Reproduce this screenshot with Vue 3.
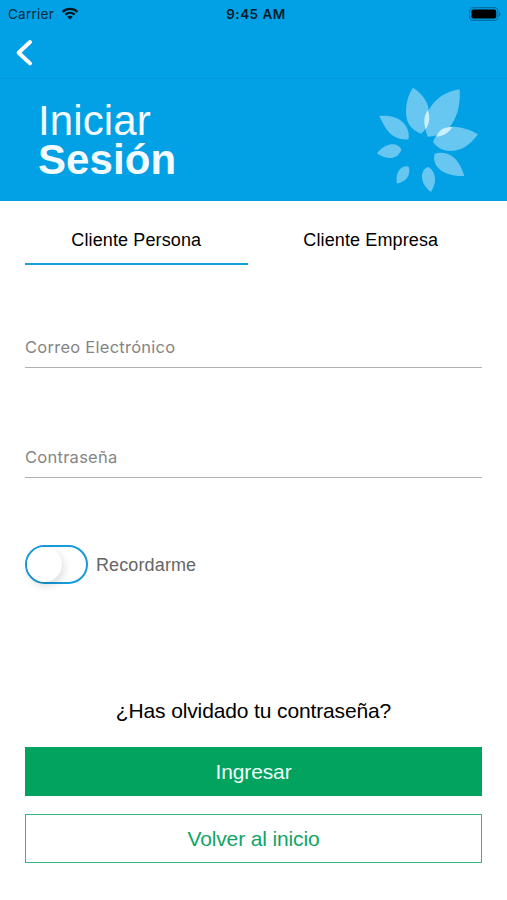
<template>
  <div class="login-screen">
    <header class="top">
      <div class="status-bar">
        <div class="carrier">
          <span class="carrier-name">Carrier</span>
          <svg class="wifi" viewBox="0 0 18 13" aria-hidden="true">
            <path d="M1.6 4.9C5.8.9 12.2.9 16.4 4.9" />
            <path d="M4.3 7.7c2.7-2.5 6.7-2.5 9.4 0" />
            <path class="dot" d="M6.3 9.8c1.5-1.3 3.9-1.3 5.4 0L9 12.5z" />
          </svg>
        </div>
        <span class="clock">9:45 AM</span>
        <svg class="battery" viewBox="0 0 32 14" aria-hidden="true">
          <rect class="shell" x=".6" y=".6" width="28.3" height="12.8" rx="3.6" />
          <rect x="2.4" y="2.5" width="24.8" height="9" rx="2" />
          <path class="tip" d="M30 4.7c2 .8 2 3.8 0 4.6z" />
        </svg>
      </div>
      <nav class="nav-bar">
        <button class="back" type="button" aria-label="Volver">
          <svg viewBox="0 0 18 28"><path d="M15 3 3.6 13.7 15 24.4" /></svg>
        </button>
      </nav>
    </header>

    <section class="hero">
      <h1>Iniciar<strong>Sesión</strong></h1>
      <svg class="flower" viewBox="30 15 315 330" aria-hidden="true">
        <path v-for="(d, i) in petals" :key="i" :d="d" />
        <path class="overlap" d="M188 90c8 21 6 41-6 58-7-22-5-40 6-58z" />
        <path class="overlap" d="M214 170c7-20 24-31 48-29-10 17-24 26-48 29z" />
      </svg>
    </section>

    <main class="content">
      <div class="tabs">
        <button
          v-for="tab in tabs"
          :key="tab"
          type="button"
          :class="['tab', { active: tab === activeTab }]"
          @click="activeTab = tab"
        >
          {{ tab }}
        </button>
      </div>

      <form @submit.prevent>
        <input v-model="email" class="field" type="email" placeholder="Correo Electrónico" />
        <input v-model="password" class="field" type="password" placeholder="Contraseña" />

        <label class="remember">
          <input v-model="remember" type="checkbox" />
          <span class="switch"><span class="knob"></span></span>
          <span class="remember-text">Recordarme</span>
        </label>

        <p class="forgot">¿Has olvidado tu contraseña?</p>
        <button class="btn primary" type="submit">Ingresar</button>
        <button class="btn outline" type="button">Volver al inicio</button>
      </form>
    </main>
  </div>
</template>

<script setup>
import { ref } from 'vue';

const tabs = ['Cliente Persona', 'Cliente Empresa'];
const activeTab = ref(tabs[0]);
const email = ref('');
const password = ref('');
const remember = ref(false);

// Pétalos del logo, en sentido horario desde arriba
const petals = [
  'M144 23C175 43 193 70 192 103C191 130 183 151 168 161C137 150 123 127 123 97C123 68 130 43 144 23Z',
  'M284 28C286 66 281 99 263 128C249 150 229 167 188 170C176 142 179 109 195 84C213 55 241 35 284 28Z',
  'M339 163C317 193 292 212 258 213C235 213 217 204 204 186C214 157 233 141 258 140C286 140 316 148 339 163Z',
  'M298 288C261 289 232 280 217 261C207 248 205 235 209 221C230 215 251 220 267 233C281 245 290 263 298 288Z',
  'M198 336C178 321 169 302 171 284C173 272 179 264 189 261C204 269 210 283 210 299C210 312 205 324 198 336Z',
  'M96 311C92 290 97 275 108 265C115 259 123 257 131 260C136 275 131 290 120 300C113 306 105 309 96 311Z',
  'M36 220C48 204 63 195 81 193C94 192 104 198 109 209C103 225 91 234 74 234C59 234 46 228 36 220Z',
  'M43 108C73 105 99 112 116 129C128 142 133 159 131 178C106 180 86 173 72 157C59 142 51 125 43 108Z',
];
</script>

<style>
body {
  margin: 0;
  background: #fff;
}
</style>

<style scoped>
.login-screen {
  width: 100%;
  min-height: 900px;
  font-family: "Liberation Sans", Arial, sans-serif;
  color: #000;
}

button,
input {
  font-family: inherit;
  box-sizing: border-box;
}

.top {
  height: 79px;
  box-sizing: border-box;
  background: #02a1e6;
  border-bottom: 1px solid #0298dc;
}

.status-bar {
  display: grid;
  grid-template-columns: 1fr auto 1fr;
  align-items: center;
  height: 27px;
  padding: 0 6px 0 8px;
  font: 13.5px Inter, sans-serif;
  color: #06293c;
}

.carrier {
  display: flex;
  align-items: center;
  gap: 7px;
}

.carrier-name {
  letter-spacing: 0.25px;
}

.wifi {
  width: 18px;
  height: 13px;
  fill: none;
  stroke: #001722;
  stroke-width: 2.3;
}
.wifi .dot {
  fill: #001722;
  stroke: none;
}

.clock {
  padding-left: 3px;
  font-weight: 600;
  letter-spacing: 0.5px;
  color: #001b29;
}

.battery {
  justify-self: end;
  width: 32px;
  height: 14px;
}
.battery .shell {
  fill: none;
  stroke: #0272a3;
  stroke-width: 1.1;
}
.battery .tip {
  fill: #0272a3;
}

.nav-bar {
  display: flex;
  align-items: center;
  height: 51px;
  padding-left: 15px;
}

.back {
  display: flex;
  padding: 0;
  border: none;
  background: none;
  cursor: pointer;
}
.back svg {
  width: 18px;
  height: 28px;
  fill: none;
  stroke: #fff;
  stroke-width: 4;
  stroke-linecap: round;
  stroke-linejoin: round;
}

.hero {
  display: flex;
  justify-content: space-between;
  align-items: flex-start;
  box-sizing: border-box;
  height: 122px;
  padding: 6px 27px 0 38px;
  background: #02a1e6;
}

.hero h1 {
  margin: 16px 0 0;
  font-size: 42px;
  font-weight: 400;
  line-height: 39px;
  letter-spacing: 0.1px;
  color: #f4fbff;
}
.hero strong {
  display: block;
}

.flower {
  width: 105px;
  height: 110px;
  fill: #67c7f0;
}
.flower .overlap {
  fill: #c9eefc;
}

.content {
  padding: 0 25px;
}

.tabs {
  display: grid;
  grid-template-columns: 1fr 1fr;
  gap: 12px;
  height: 64px;
}

.tab {
  padding: 17px 0 0;
  border: none;
  border-bottom: 2px solid transparent;
  background: none;
  font-size: 18px;
  letter-spacing: 0.12px;
  color: #000;
  cursor: pointer;
}
.tab.active {
  border-color: #169fdd;
}

form {
  display: flex;
  flex-direction: column;
  padding-top: 62px;
}

.field {
  height: 41px;
  margin-bottom: 69px;
  padding: 0;
  border: none;
  border-bottom: 1px solid #b1b1b1;
  border-radius: 0;
  outline: none;
  font: 16.5px Inter, sans-serif;
  letter-spacing: 0.26px;
}
.field::placeholder {
  color: #858585;
  opacity: 1;
}

.remember {
  display: flex;
  align-items: center;
  gap: 8px;
  height: 39px;
  margin-top: -2px;
  font-size: 18px;
  letter-spacing: 0.12px;
  color: #666;
  cursor: pointer;
}
.remember input {
  display: none;
}

.remember-text {
  padding-top: 2px;
}

.switch {
  box-sizing: border-box;
  width: 63px;
  height: 39px;
  border: 2px solid #169bd9;
  border-radius: 20px;
}

.knob {
  display: block;
  width: 35px;
  height: 35px;
  border-radius: 50%;
  background: #fff;
  box-shadow: 2px 4px 8px rgba(0, 0, 0, 0.14);
}
.remember input:checked + .switch {
  background: #169bd9;
}
.remember input:checked + .switch .knob {
  margin-left: 24px;
}

.forgot {
  margin: 115px 0 24px;
  text-align: center;
  font-size: 21px;
  line-height: 24px;
  letter-spacing: -0.13px;
}

.btn {
  height: 49px;
  padding: 0;
  border: 1px solid #02a25f;
  border-radius: 0;
  font-size: 21px;
  letter-spacing: -0.13px;
  cursor: pointer;
}
.btn.primary {
  background: #02a25f;
  color: #effff7;
}
.btn.outline {
  margin-top: 18px;
  border-color: #38b381;
  background: #fff;
  color: #10a566;
}
</style>
